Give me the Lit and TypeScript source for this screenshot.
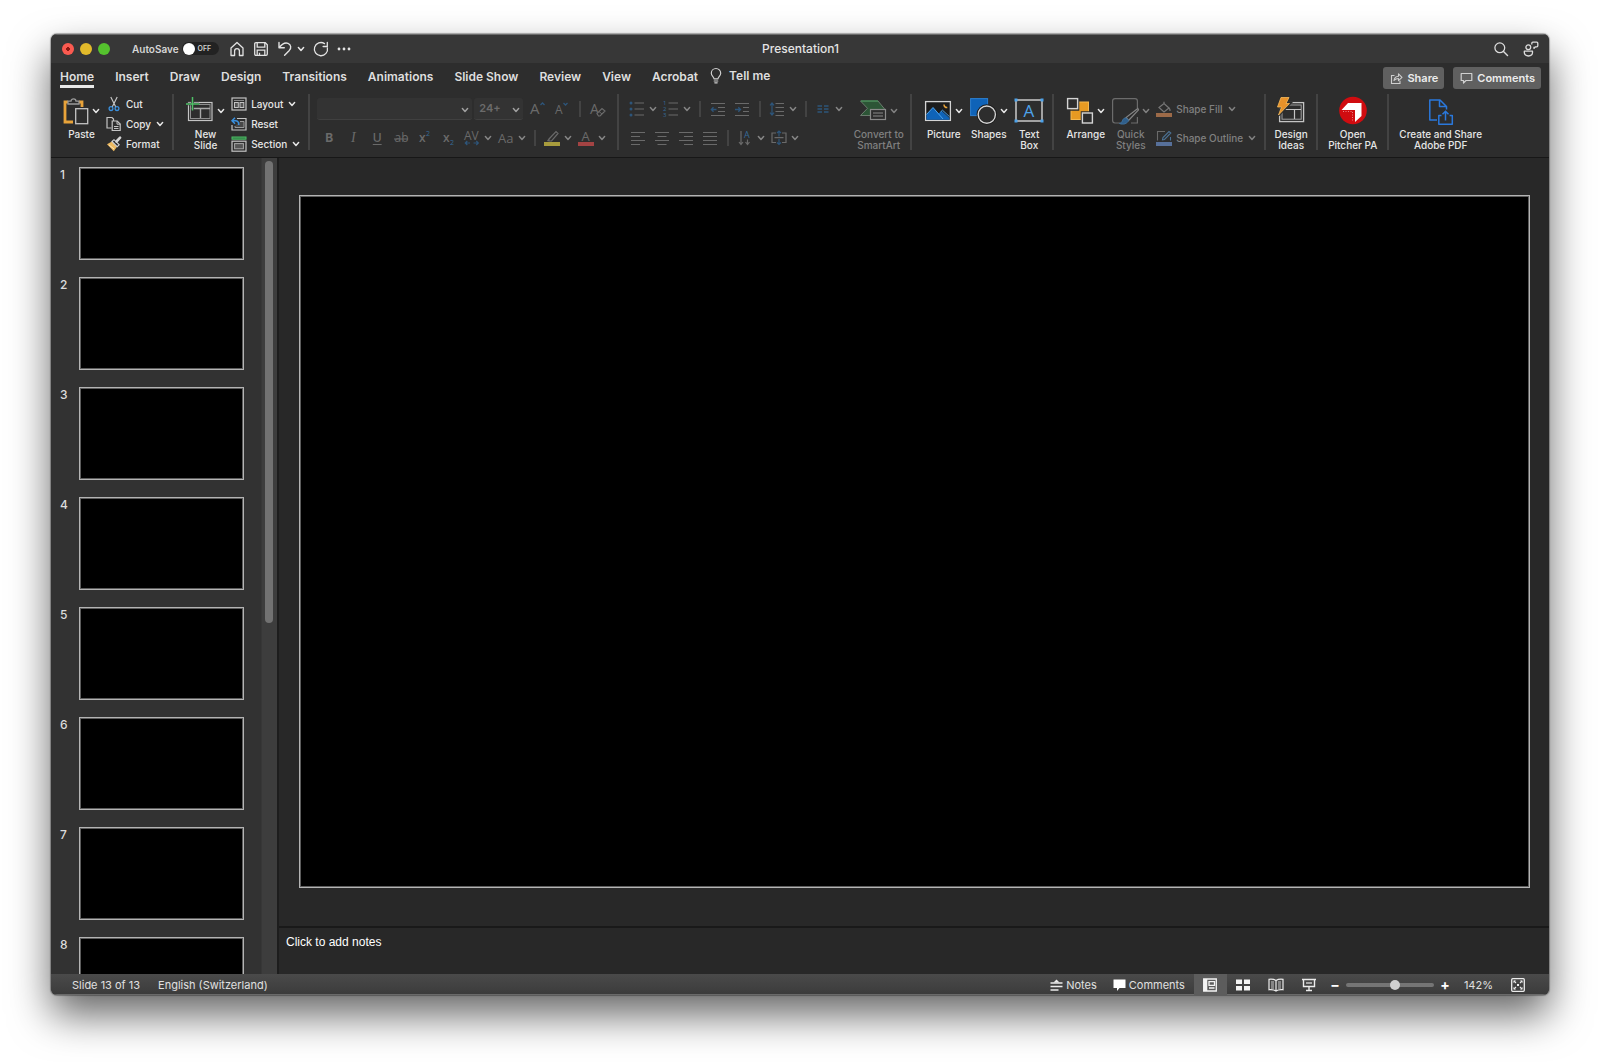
import { LitElement, html, svg, css, nothing, TemplateResult } from "lit";
import { customElement, state } from "lit/decorators.js";
import { classMap } from "lit/directives/class-map.js";

const ico = (w: number, h: number, body: unknown) => html`
  <svg class="ico" width=${w} height=${h} viewBox="0 0 ${w} ${h}" fill="none" aria-hidden="true">${body}</svg>`;

const chevron = html`<svg class="chev" width="8" height="8" viewBox="0 0 8 8" fill="none" aria-hidden="true">
  <path d="M1.4 2.6 4 5.4 6.6 2.6" stroke="currentColor" stroke-width="1.5" stroke-linecap="round" stroke-linejoin="round"/></svg>`;

const LIGHT = "#c4c4c4";
const DIM = "#6a6a6a";
const DIM_BLUE = "#2d557a";

const bars = (rows: [number, number][], step = 4, color = DIM) =>
  rows.map(([x1, x2], i) => svg`<path d="M${x1} ${1.5 + i * step}H${x2}" stroke=${color} stroke-width="1.2"/>`);

const icons = {
  home: ico(16, 16, svg`<path d="M2 7 8 1.5 14 7v7.5h-3.6V10a2.4 2.4 0 0 0-4.8 0v4.500H2z" stroke="#e2e2e2" stroke-width="1.3" stroke-linejoin="round"/>`),
  save: ico(16, 16, svg`<path d="M1.700 3q0-1.300 1.300-1.300h9.300l2 2v9.300q0 1.300-1.300 1.300H3q-1.300 0-1.300-1.300z" stroke="#e2e2e2" stroke-width="1.300"/><path d="M4.200 2v4.200h7.600V2M4.200 14V9.200h7.600V14M6.500 14v-2.300" stroke="#e2e2e2" stroke-width="1.300"/>`),
  undo: ico(16, 16, svg`<path d="M2 1.500v5.300h5.300M2.200 6.600C5 3 8 1.300 11 2.400c3.200 1.300 3.500 4.600 1.300 7L7.600 14.200" stroke="#e2e2e2" stroke-width="1.400" stroke-linecap="round" stroke-linejoin="round"/>`),
  redo: ico(16, 16, svg`<path d="M14.400 6.800A6.600 6.600 0 1 1 11.500 2.600" stroke="#e2e2e2" stroke-width="1.300" stroke-linecap="round"/><path d="M14.300 1.300v4.200h-4.200" stroke="#e2e2e2" stroke-width="1.300" stroke-linecap="round"/>`),
  dots: ico(14, 16, svg`<circle cx="2" cy="8" r="1.400" fill="#e2e2e2"/><circle cx="7" cy="8" r="1.400" fill="#e2e2e2"/><circle cx="12" cy="8" r="1.400" fill="#e2e2e2"/>`),
  search: ico(16, 16, svg`<circle cx="6.800" cy="6.800" r="4.900" stroke="#dcdcdc" stroke-width="1.300"/><path d="m10.500 10.500 4 4" stroke="#dcdcdc" stroke-width="1.500" stroke-linecap="round"/>`),
  person: ico(16, 16, svg`<circle cx="5.300" cy="6.300" r="2.400" stroke="#dcdcdc" stroke-width="1.300"/><path d="M1.300 10.200h8.200v1.400c0 2-1.800 3.400-4.100 3.400s-4.100-1.400-4.100-3.400z" stroke="#dcdcdc" stroke-width="1.300" stroke-linejoin="round"/><path d="M8.800 3.600V2.200q0-1 1-1h4q1 0 1 1v2.600q0 1-1 1h-1.300L11 7.400V5.800" stroke="#dcdcdc" stroke-width="1.300" stroke-linejoin="round"/>`),
  bulb: ico(12, 16, svg`<path d="M4 10.800c0-1.800-2.700-2.800-2.700-5.600a4.700 4.700 0 0 1 9.400 0c0 2.800-2.700 3.800-2.700 5.600zM4.200 13h3.600M4.800 14.800h2.400" stroke="#cfcfcf" stroke-width="1.200" stroke-linecap="round" stroke-linejoin="round"/>`),
  share: ico(13, 13, svg`<path d="M4.500 3.500h-3v8h8.500V8.800" stroke="#cfcfcf" stroke-width="1.100"/><path d="M4 8.500c.4-2.600 2-4 4.500-4.200V1.800L12 5.300 8.500 8.600V6.500C6.500 6.500 5.200 7.200 4 8.500z" stroke="#cfcfcf" stroke-width="1.100" stroke-linejoin="round"/>`),
  bubble: ico(13, 13, svg`<path d="M1.200 1.500h10.600v7H6L3.500 11V8.500H1.200z" stroke="#d0d0d0" stroke-width="1.200" stroke-linejoin="round"/>`),

  paste: ico(26, 28, svg`<path d="M5 5H2v20h8M16 5h3v5" stroke="#e8a33a" stroke-width="2.800"/><path d="M5 7V4.200h3c0-3.200 5-3.200 5 0h3V7z" stroke="#9a9a9a" stroke-width="1.300" fill="#2d2d2d"/><rect x="12.700" y="11.700" width="12" height="15" fill="#2d2d2d" stroke=${LIGHT} stroke-width="1.300"/>`),
  cut: ico(16, 16, svg`<path d="M4.800 1 9.800 11M11.200 1 6.200 11" stroke=${LIGHT} stroke-width="1.200"/><circle cx="5" cy="12.600" r="1.900" stroke="#3a8fdc" stroke-width="1.300"/><circle cx="11" cy="12.600" r="1.900" stroke="#3a8fdc" stroke-width="1.300"/>`),
  copy: ico(16, 16, svg`<path d="M5.500 12H1V1.500h5l1.500 1.500v2" stroke=${LIGHT} stroke-width="1.200"/><path d="M6.200 5h5l3 3v6.500h-8z" fill="#2d2d2d" stroke=${LIGHT} stroke-width="1.200"/><path d="M11 5v3.200h3.200M8 10.500h4.500M8 12.500h4.500" stroke=${LIGHT} stroke-width="1"/>`),
  format: ico(16, 16, svg`<path d="M1 8.200 6 5.500l5 5.200-3.200 4.500z" fill="#edb95f"/><path d="m3 9 5 4" stroke="#fbe7bf" stroke-width="1"/><path d="m6 5.500 2-1.800 5.200 5.100-2 1.900z" fill="#2d2d2d" stroke="#d5d5d5" stroke-width="1.100"/><path d="m10.500 5.500 3.600-3.800" stroke="#d5d5d5" stroke-width="2.600" stroke-linecap="round"/>`),
  newSlide: ico(28, 28, svg`<rect x="2.500" y="5.500" width="23.500" height="18" stroke=${LIGHT} stroke-width="1.200"/><rect x="4.500" y="7.500" width="19.500" height="14" stroke="#8d8d8d"/><path d="M5 11.500h19M14.500 11.500V21" stroke="#a8a8a8" stroke-width="1.400"/><path d="M6.500 1v12M0 7h13" stroke="#2d2d2d" stroke-width="2.500"/><path d="M6.500 0v13.500M0 7h13.500" stroke="#4fbf67" stroke-width="1.500"/>`),
  layout: ico(16, 14, svg`<rect x="1" y="1" width="14" height="12" stroke=${LIGHT} stroke-width="1.200"/><path d="M3 3.500h10" stroke="#8a8a8a"/><rect x="3.500" y="5.500" width="3.800" height="5" fill="#555" stroke=${LIGHT}/><rect x="9" y="5.500" width="3.800" height="5" fill="#555" stroke=${LIGHT}/>`),
  reset: ico(16, 14, svg`<path d="M6 1.500h9V13H1V8" stroke=${LIGHT} stroke-width="1.200"/><path d="M9 4.500h4v6H4V9" stroke="#9a9a9a" fill="#484848"/><path d="M4 .800 1 3.800l3 3M1.300 3.800h3c2.500 0 3.500 1.400 3.500 4.200" stroke="#3a8fdc" stroke-width="1.500"/>`),
  section: ico(16, 16, svg`<rect x="1" y="1" width="14" height="2.200" fill="#2f7a43" stroke="#4fbf67" stroke-width="1"/><rect x="1" y="5.200" width="14" height="10" stroke=${LIGHT} stroke-width="1.200"/><rect x="3.600" y="7.600" width="8.800" height="5.200" fill="#555" stroke="#a8a8a8"/>`),

  grow: ico(16, 16, svg`<text x="0" y="13" font-size="15" fill=${DIM}>A</text><path d="m10.500 4 2-2 2 2" stroke=${DIM_BLUE} stroke-width="1.300"/>`),
  shrink: ico(16, 16, svg`<text x="1" y="13" font-size="12" fill=${DIM}>A</text><path d="m9.500 2 2 2 2-2" stroke=${DIM_BLUE} stroke-width="1.300"/>`),
  clear: ico(16, 16, svg`<text x="0" y="12.500" font-size="14" fill=${DIM}>A</text><path d="m7 12.500 5-5 3 2.500-5 5H8.500z" fill="#2d2d2d" stroke=${DIM} stroke-width="1.200"/><path d="m9 10.500 3 2.500" stroke=${DIM}/>`),
  strike: ico(16, 16, svg`<text x="1.500" y="12" font-size="12" fill=${DIM}>ab</text><path d="M1 9h14" stroke=${DIM} stroke-width="1.200"/>`),
  sup: ico(16, 16, svg`<text x="2" y="12" font-size="12" font-weight="600" fill=${DIM}>x</text><text x="9" y="6" font-size="7" fill="#356a98">2</text>`),
  sub: ico(16, 16, svg`<text x="2" y="12" font-size="12" font-weight="600" fill=${DIM}>x</text><text x="9" y="15" font-size="7" fill="#356a98">2</text>`),
  spacing: ico(16, 16, svg`<text x="0" y="9.500" font-size="12" fill=${DIM}>AV</text><path d="M6 13H1.500M3.300 11l-2 2 2 2M9.500 13H14M12.300 11l2 2-2 2" stroke=${DIM_BLUE} stroke-width="1.200"/>`),
  textCase: ico(16, 16, svg`<text x="0" y="12.500" font-size="13" fill=${DIM}>Aa</text>`),
  highlight: ico(16, 16, svg`<path d="m5 9 7-7.500 2 2L7.500 11H5zM3.500 11.200 5 9" stroke=${DIM} stroke-width="1.200"/><rect x="0" y="12" width="16" height="4" fill="#a89c3d"/>`),
  fontColor: ico(16, 16, svg`<text x="3.500" y="10.500" font-size="13" fill=${DIM}>A</text><rect x="0" y="12" width="16" height="4" fill="#a34343"/>`),

  bullets: ico(16, 16, svg`${[2, 8, 14].map((y) => svg`<circle cx="2" cy=${y} r="1.500" fill=${DIM_BLUE}/><path d="M5.500 ${y}H15" stroke=${DIM} stroke-width="1.200"/>`)}`),
  numbers: ico(16, 16, svg`${[2, 8, 14].map((y, i) => svg`<text x="0" y=${y + 2} font-size="6" fill="#356a98">${i + 1}</text><path d="M5.500 ${y}H15" stroke=${DIM} stroke-width="1.200"/>`)}`),
  outdent: ico(16, 14, svg`${bars([[1, 15], [8, 15], [8, 15], [1, 15]])}<path d="M6.500 7.500h-5M3.500 5.200 1.300 7.500l2.200 2.300" stroke=${DIM_BLUE} stroke-width="1.300"/>`),
  indent: ico(16, 14, svg`${bars([[1, 15], [9, 15], [9, 15], [1, 15]])}<path d="M1 7.500h5.500M4.300 5.200l2.200 2.300-2.200 2.300" stroke=${DIM_BLUE} stroke-width="1.300"/>`),
  lines: ico(16, 14, svg`${bars([[6.5, 15], [6.5, 15], [6.5, 15], [6.5, 15]])}<path d="M3 1v12M1 3.300 3 1l2 2.300M1 10.700 3 13l2-2.300" stroke=${DIM_BLUE} stroke-width="1.200"/>`),
  columns: ico(16, 14, svg`${[4, 7, 10].map((y) => svg`<path d="M2.500 ${y}H7M9 ${y}h4.500" stroke=${DIM_BLUE} stroke-width="1.300"/>`)}`),
  left: ico(16, 14, svg`${bars([[1, 15], [1, 10], [1, 15], [1, 10]])}`),
  center: ico(16, 14, svg`${bars([[1, 15], [3.5, 12.5], [1, 15], [3.5, 12.5]])}`),
  right: ico(16, 14, svg`${bars([[1, 15], [6, 15], [1, 15], [6, 15]])}`),
  justify: ico(16, 14, svg`${bars([[1, 15], [1, 15], [1, 15], [1, 15]])}`),
  direction: ico(16, 16, svg`<path d="M4 1v13M2 12l2 2.500L6 12M10.500 9.500V14M8.500 12l2 2.500 2-2.500" stroke=${DIM} stroke-width="1.200"/><text x="7" y="8" font-size="9" fill="#356a98">A</text>`),
  alignText: ico(16, 16, svg`<path d="M5 3H1v9.500h4M11 3h4v9.500h-4M3.500 7.700h9" stroke=${DIM} stroke-width="1.200"/><path d="M8 1v5.500M6 3l2-2 2 2M8 9v5.500M6 12.500l2 2 2-2" stroke=${DIM_BLUE} stroke-width="1.200"/>`),
  smartArt: ico(28, 28, svg`<path d="M1.500 4H19l7 8.500v6H1.500l7-7.200z" fill="#2c5536" stroke="#6a7a6d" stroke-width="1"/><path d="M2 4h17" stroke="#3f9a55"/><rect x="11.500" y="12.500" width="15" height="10" fill="#2d2d2d" stroke="#8a8a8a" stroke-width="1.200"/><path d="M14 16h10M14 19h10" stroke="#8a8a8a"/>`),

  picture: ico(28, 28, svg`<rect x="1.600" y="4.600" width="24.800" height="18.800" fill="#1c1c1c" stroke="#d4d4d4" stroke-width="1.300"/><path d="M2.500 17.500 9 10.500l5.500 6 3-2.800 8 7.300v1.700h-23z" fill="#0f63b8"/><path d="M2.500 17.500 9 10.500l10 11.500M16.500 15l2-1.800 7 6.500" stroke="#4ea3ea" stroke-width="1"/><path d="M20 7.500c0 2 1.500 3.300 3.300 3" stroke="#e8a33a" stroke-width="1.500"/>`),
  shapes: ico(28, 28, svg`<rect x="1.600" y="1.600" width="17" height="17" fill="#0f63b8" stroke="#2c7fd0"/><circle cx="17.800" cy="17.600" r="9" fill="#2d2d2d" stroke="#1c1c1c" stroke-width="2.500"/><circle cx="17.800" cy="17.600" r="8.600" stroke="#d4d4d4" stroke-width="1.400"/>`),
  textBox: ico(30, 28, svg`<rect x="2" y="3" width="26" height="21" stroke="#d4d4d4" stroke-width="1.400"/><text x="9.500" y="19.500" font-size="17" fill="#4ea3ea">A</text><path d="M.500 1.500h3v3h-3zM26.500 1.500h3v3h-3zM.500 22.500h3v3h-3zM26.500 22.500h3v3h-3z" fill="#4ea3ea"/>`),
  arrange: ico(28, 28, svg`<rect x="5" y="5" width="17.500" height="17.500" fill="#e79a22" stroke="#f4b850"/><path d="M12.500 4v9H4M15.500 24v-9H24" stroke="#2d2d2d" stroke-width="1.500"/><rect x="1.600" y="1.600" width="10" height="10" fill="#2d2d2d" stroke="#d4d4d4" stroke-width="1.400"/><rect x="16.400" y="16" width="10" height="10" fill="#2d2d2d" stroke="#d4d4d4" stroke-width="1.400"/>`),
  quick: ico(28, 28, svg`<path d="M9 26H4q-2.400 0-2.400-2.400V4Q1.600 1.600 4 1.600h20Q26.400 1.600 26.400 4v7M26.400 20v6H20" stroke="#6c6c6c" stroke-width="1.200"/><path d="M26.800 11.500 15 20.500l2.500 3 10-10.500z" stroke="#858585" stroke-width="1.200" fill="#2d2d2d"/><path d="M17.500 23.500c-1 3-5 4.500-9 3 2.500-.8 2.500-2 3.500-4 1.400-2.300 4.500-1.800 5.500 1z" fill="#2f5f8c" stroke="#3f729e"/>`),
  fill: ico(16, 16, svg`<path d="m3 6.500 5-4 5 4.500-5 4zM8 2.500V.800M13 7c1 1 1.200 2 1 3" stroke="#777" stroke-width="1.200"/><rect x="0" y="12" width="16" height="4" fill="#9c6a48"/>`),
  outline: ico(16, 16, svg`<path d="M9 1.500H1.500v9" stroke="#6a6a6a" stroke-width="1.100"/><path d="M6.500 9.800 7 7.500l6-6 1.800 1.500L8.500 9.500zM14.500 7v3.500" stroke="#4c7396" stroke-width="1.100"/><rect x="0" y="12" width="16" height="4" fill="#57709a"/>`),
  ideas: ico(30, 28, svg`<rect x="3.600" y="5.600" width="24" height="19" fill="#2d2d2d" stroke=${LIGHT} stroke-width="1.300"/><rect x="6" y="8" width="19.200" height="14.200" stroke="#a0a0a0"/><path d="M6 12.500h19M18.500 12.500V22" stroke=${LIGHT} stroke-width="1.200"/><path d="M5 .500h8L10 6.500h3.500L2.500 18 5.500 10H1.500z" stroke="#2d2d2d" stroke-width="3"/><path d="M5 .500h8L10 6.500h3.500L2.500 18 5.500 10H1.500z" fill="#e8922a" stroke="#f6bb5c" stroke-width=".8"/>`),
  pitcher: ico(28, 28, svg`<circle cx="14" cy="13.500" r="13.800" fill="#d00c10"/><path d="M9 6h13.500v13L16 25V13H2.500z" fill="#fff"/><path d="M4 14.500h9.500V25" stroke="#f2a0a0" stroke-width=".8" stroke-dasharray="1 1.500"/>`),
  pdf: ico(26, 28, svg`<path d="M9 23H1.800V3H12l6.500 6.500v3M11.500 3v6.500h6.500" stroke="#2a78dc" stroke-width="1.500" stroke-linejoin="round"/><path d="M13.500 18.500h-2.700v8.700h13.500v-8.700h-2.700" stroke="#2a78dc" stroke-width="1.500" stroke-linejoin="round"/><path d="M17.500 23.500v-9M14.500 17.300l3-3 3 3" stroke="#2a78dc" stroke-width="1.500"/>`),

  notes: ico(13, 14, svg`<path d="M3.500 4.500 6.500 1.500l3 3z" fill="#ececec"/><path d="M.500 5h12M.500 8.500h12M.500 12h8" stroke="#ececec" stroke-width="1.300"/>`),
  commentFill: ico(13, 14, svg`<path d="M.500 1.500h12v8.500H6.500L4 13V10H.500z" fill="#fff"/>`),
  normal: ico(14, 14, svg`<path d="M.700 1h12.600v12H.700z" stroke="#f4f4f4" stroke-width="1.300"/><path d="M.700 1h3.600v12H.700z" fill="#f4f4f4"/><path d="M6 3.700h5.500v3.600H6zM6 10h5.500" stroke="#f4f4f4" stroke-width="1.300"/>`),
  sorter: ico(14, 14, svg`<path d="M0 1.500h6v4.500H0zM8 1.500h6v4.500H8zM0 8h6v4.500H0zM8 8h6v4.500H8z" fill="#f4f4f4"/>`),
  reading: ico(16, 14, svg`<path d="M8 2.500C6 1.200 3.500 1 1 1.300v10.400c2.500-.3 5-.1 7 1.300 2-1.400 4.500-1.600 7-1.300V1.300C12.500 1 10 1.200 8 2.500zM8 2.500V13" stroke="#ececec" stroke-width="1.200"/><path d="M3 4h3M3 6h3M3 8h3M3 10h3M10 4h3M10 6h3M10 8h3M10 10h3" stroke="#c9c9c9"/>`),
  show: ico(14, 14, svg`<path d="M0 1.500h14M1.500 2v6.500h11V2M7 8.500V12M4 12.500h6" stroke="#ececec" stroke-width="1.400"/><path d="M4 5h6" stroke="#ececec" stroke-width="1.200"/>`),
  fit: ico(14, 14, svg`<rect x=".7" y=".7" width="12.600" height="12.600" rx="1" stroke="#ececec" stroke-width="1.300"/><path d="M3 3l2 2M11 3 9 5M3 11l2-2M11 11 9 9" stroke="#ececec" stroke-width="1.100"/><path d="M2.500 2.500H5L2.500 5zM11.500 2.500H9L11.500 5zM2.500 11.500H5L2.500 9zM11.500 11.500H9L11.500 9zM6 6h2v2H6z" fill="#ececec"/>`),
};

const TABS = ["Home", "Insert", "Draw", "Design", "Transitions", "Animations", "Slide Show", "Review", "View", "Acrobat"];
const SLIDES = [1, 2, 3, 4, 5, 6, 7, 8];

const VIEWS: [string, TemplateResult][] = [
  ["Normal", icons.normal],
  ["Slide Sorter", icons.sorter],
  ["Reading View", icons.reading],
  ["Slide Show", icons.show],
];

@customElement("app-root")
export class AppRoot extends LitElement {
  @state() private tab = "Home";
  @state() private view = "Normal";
  @state() private zoom = 142;

  static styles = css`
    :host {
      display: block;
      box-sizing: border-box;
      height: 100vh;
      min-height: 400px;
      padding: 34px 51px 67px 51px;
      overflow: hidden;
      background: #fff;
      color: #e6e6e6;
      font: 500 11px/12px Inter, "Liberation Sans", sans-serif;
    }
    * { box-sizing: border-box; }
    button, select, input { font: inherit; color: inherit; margin: 0; }
    button { background: none; border: 0; padding: 0; white-space: nowrap; }
    svg { display: block; flex: none; overflow: visible; }
    svg text { font-family: "Open Sans", "Liberation Sans", sans-serif; }

    .window {
      display: flex;
      flex-direction: column;
      height: 100%;
      border-radius: 6px;
      overflow: hidden;
      background: #2d2d2d;
    }
    .frame {
      height: 100%;
      border-radius: 6px;
      box-shadow: 0 0 1px 1px rgba(0, 0, 0, 0.3), 0 20px 40px rgba(0, 0, 0, 0.6);
    }

    .titlebar {
      display: grid;
      grid-template-columns: 1fr auto 1fr;
      align-items: center;
      height: 29px;
      flex: none;
      padding: 0 10px 0 11px;
      background: #373737;
      box-shadow: inset 0 1px #6a6a6a;
    }
    .titlebar h1 { margin: 0; font: 500 12px/16px Inter, sans-serif; color: #e4e4e4; }
    .row { display: flex; align-items: center; }
    .lights { gap: 6px; margin-right: 22px; }
    .light { width: 12px; height: 12px; border-radius: 50%; }
    .close { background: radial-gradient(circle, #8c1710 0 2px, #fb5a50 2px); }
    .minimise { background: #e2ba2b; }
    .maximise { background: #55c22e; }
    .autosave { gap: 3px; color: #d6d6d6; margin-right: 10px; font-size: 10px; font-weight: 600; }
    .switch {
      appearance: none;
      width: 12px;
      height: 12px;
      border-radius: 50%;
      background: #fff;
    }
    .track {
      gap: 3px;
      width: 37px;
      height: 13px;
      padding: 0 1px;
      border-radius: 7px;
      background: #222;
      font-size: 7px;
      color: #cfcfcf;
    }
    .quick { gap: 8px; }
    .undo { gap: 4px; }
    .end { justify-content: flex-end; gap: 14px; }

    .tabs { height: 29px; flex: none; padding: 0 8px 0 9px; align-items: flex-start; }
    .tablist { gap: 21px; align-items: flex-start; }
    .tab {
      font: 600 12px/16px Inter, sans-serif;
      height: 25px;
      padding-top: 5px;
      border-bottom: 3px solid transparent;
      color: #dedede;
    }
    .tab.active { border-image: linear-gradient(#e8e8e8, #e8e8e8) 1; }
    .tell { display: flex; gap: 7px; font: 600 12px/16px Inter, sans-serif; padding-top: 5px; margin-left: 12px; color: #dedede; }
    .actions { margin-left: auto; gap: 9px; padding-top: 4px; }
    .pill {
      display: flex;
      align-items: center;
      gap: 4px;
      height: 22px;
      padding: 0 6px 0 7px;
      border-radius: 3px;
      background: #606060;
      color: #ececec;
      font-weight: 600;
    }

    .ribbon {
      display: flex;
      flex: none;
      height: 66px;
      padding: 2px 0 7px;
      border-bottom: 1px solid #171717;
    }
    .group { display: flex; gap: 6px; padding: 0 8px 0 12px; border-right: 2px solid #434343; flex: none; }
    .group:last-child { border-right: 0; }
    .group.tight { padding: 0 7px; }
    .group.text { padding: 0 12px 0 7px; }
    .group.solo { padding: 0 10px; }
    .big {
      display: flex;
      flex-direction: column;
      align-items: center;
      gap: 4px;
      padding-top: 3px;
      font-size: 10px;
      line-height: 11px;
    }
    .big .label { width: 0; display: flex; justify-content: center; }
    .big .label span { flex: none; text-align: center; white-space: pre; }
    .big .top { display: flex; align-items: center; gap: 3px; height: 28px; }
    .big.wide .label { width: auto; }
    .off { color: #808080; }
    .stack { display: grid; grid-auto-rows: 20px; align-items: center; align-content: start; }
    .stack.pair { grid-auto-rows: 29px; }
    .small { display: flex; align-items: center; gap: 4px; font-size: 10px; }
    .small .chev { margin-left: 1px; }
    .grid { display: flex; flex-direction: column; }
    .tools { display: flex; align-items: center; height: 29px; flex: none; }
    .tool { width: 24px; height: 24px; display: grid; place-items: center; font-size: 12px; color: #6a6a6a; }
    .tool.split { width: 34px; display: flex; align-items: center; justify-content: center; gap: 4px; }
    .split .chev { color: #858585; }
    .bold { font-weight: 700; }
    .italic { font-family: "Liberation Serif", serif; font-style: italic; font-size: 14px; }
    .underline { text-decoration: underline; text-underline-offset: 2px; }
    .rule { width: 2px; height: 16px; background: #434343; margin: 0 5px; }
    .field { position: relative; height: 22px; }
    .field select {
      appearance: none;
      width: 100%;
      height: 100%;
      padding: 0 5px;
      border: 0;
      border-bottom: 1px solid #404040;
      border-radius: 3px;
      background: #333;
      color: #6b6b6b;
      font-size: 11px;
      font-weight: 600;
      opacity: 1;
    }
    .field .chev { position: absolute; right: 3px; top: 8px; color: #a0a0a0; }
    .family { width: 155px; margin-right: 2px; }
    .size { width: 49px; margin-right: 3px; }
    .paragraph { margin-right: 7px; }

    .body { display: flex; flex: 1; min-height: 0; }
    .panel { display: flex; width: 228px; flex: none; background: #323232; border-right: 2px solid #1d1d1d; }
    .thumbs {
      flex: 1;
      margin: 0;
      padding: 9px 17px 0 9px;
      display: flex;
      flex-direction: column;
      gap: 17px;
      list-style: none;
      overflow: hidden;
    }
    .thumb { display: grid; grid-template-columns: 19px 1fr; flex: none; }
    .thumb span { font-size: 12px; line-height: 16px; color: #dcdcdc; }
    .thumb button, .slide { background: #000; border: 1px solid #b4b4b4; box-shadow: inset 0 0 0 1px #5c5c5c; }
    .thumb button { height: 93px; }
    .scroll { width: 16px; padding: 3px; background: #3d3d3d; border-left: 1px solid #373737; flex: none; }
    .bar { width: 8px; height: 57%; border-radius: 4px; background: #727272; }

    .main { display: flex; flex-direction: column; flex: 1; min-width: 0; background: #282828; }
    .stage { flex: 1; min-height: 0; padding: 37px 19px 38px 20px; }
    .slide { height: 100%; }
    .notes {
      height: 48px;
      flex: none;
      padding: 6px 7px;
      border: 0;
      border-top: 2px solid #191919;
      background: #282828;
      resize: none;
      outline: 0;
      font: 12px/16px "Liberation Sans", Arial, sans-serif;
      color: #fff;
    }
    .notes::placeholder { color: #fff; opacity: 1; }

    .status {
      height: 21px;
      flex: none;
      padding: 0 24px 0 21px;
      background: linear-gradient(#4a4a4a, #3b3b3b);
      box-shadow: inset 0 -1px #6a6a6a;
      color: #e0e0e0;
      font-weight: 400;
    }
    .status .lang { margin-left: 18px; }
    .status .right { margin-left: auto; height: 100%; }
    .status .toggle { display: flex; align-items: center; gap: 3px; margin-right: 16px; }
    .status .toggle.last { margin-right: 9px; }
    .view { width: 33px; height: 100%; display: grid; place-items: center; }
    .view.active { background: #5c5c5c; }
    .step { font: 700 14px/16px Inter, sans-serif; width: 10px; color: #fff; }
    .zoom { gap: 6px; margin-left: 4px; }
    .slider { appearance: none; width: 88px; height: 10px; background: none; }
    .slider::-webkit-slider-runnable-track { height: 4px; border-radius: 2px; background: #757575; }
    .slider::-webkit-slider-thumb {
      appearance: none;
      width: 10px;
      height: 10px;
      margin-top: -3px;
      border-radius: 50%;
      background: #cfcfcf;
    }
    .percent { margin: 0 18px 0 14px; }
  `;

  private big(label: string, icon: TemplateResult, opts: { menu?: boolean; off?: boolean; wide?: boolean } = {}) {
    return html`<button class=${classMap({ big: true, off: !!opts.off, wide: !!opts.wide })} ?disabled=${opts.off}>
      <span class="top">${icon}${opts.menu ? chevron : nothing}</span>
      <span class="label"><span>${label}</span></span>
    </button>`;
  }

  private small(label: string, icon: TemplateResult, menu = false, off = false) {
    return html`<button class=${classMap({ small: true, off })} ?disabled=${off}>
      ${icon}<span>${label}</span>${menu ? chevron : nothing}
    </button>`;
  }

  private tool(name: string, content: unknown, extra = "") {
    return html`<button class="tool ${extra}" disabled aria-label=${name}>${content}</button>`;
  }

  private split(name: string, icon: TemplateResult) {
    return html`<button class="tool split" disabled aria-label=${name}>${icon}${chevron}</button>`;
  }

  private renderTitle() {
    return html`<header class="titlebar">
      <div class="row">
        <div class="row lights">
          <button class="light close" aria-label="Close"></button>
          <button class="light minimise" aria-label="Minimise"></button>
          <button class="light maximise" aria-label="Full screen"></button>
        </div>
        <label class="row autosave">AutoSave
          <span class="row track"><input class="switch" type="checkbox" role="switch" />OFF</span>
        </label>
        <div class="row quick">
          <button aria-label="Home">${icons.home}</button>
          <button aria-label="Save">${icons.save}</button>
          <button class="row undo" aria-label="Undo">${icons.undo}${chevron}</button>
          <button aria-label="Redo">${icons.redo}</button>
          <button aria-label="More">${icons.dots}</button>
        </div>
      </div>
      <h1>Presentation1</h1>
      <div class="row end">
        <button aria-label="Search">${icons.search}</button>
        <button aria-label="Collaborate">${icons.person}</button>
      </div>
    </header>`;
  }

  private renderTabs() {
    return html`<nav class="row tabs">
      <div class="row tablist" role="tablist">
        ${TABS.map((t) => html`<button
          role="tab"
          aria-selected=${t === this.tab}
          class=${classMap({ tab: true, active: t === this.tab })}
          @click=${() => (this.tab = t)}
        >${t}</button>`)}
      </div>
      <button class="tell">${icons.bulb}Tell me</button>
      <div class="row actions">
        <button class="pill">${icons.share}Share</button>
        <button class="pill">${icons.bubble}Comments</button>
      </div>
    </nav>`;
  }

  private renderRibbon() {
    const rule = html`<span class="rule"></span>`;
    return html`<section class="ribbon" aria-label="Ribbon">
      <div class="group">
        ${this.big("Paste", icons.paste, { menu: true })}
        <div class="stack">
          ${this.small("Cut", icons.cut)} ${this.small("Copy", icons.copy, true)} ${this.small("Format", icons.format)}
        </div>
      </div>
      <div class="group">
        ${this.big("New\nSlide", icons.newSlide, { menu: true })}
        <div class="stack">
          ${this.small("Layout", icons.layout, true)} ${this.small("Reset", icons.reset)}
          ${this.small("Section", icons.section, true)}
        </div>
      </div>
      <div class="group tight">
        <div class="grid">
          <div class="tools">
            <div class="field family"><select disabled aria-label="Font"><option></option></select>${chevron}</div>
            <div class="field size"><select disabled aria-label="Font size"><option>24+</option></select>${chevron}</div>
            ${this.tool("Increase font size", icons.grow)} ${this.tool("Decrease font size", icons.shrink)} ${rule}
            ${this.tool("Clear formatting", icons.clear)}
          </div>
          <div class="tools">
            ${this.tool("Bold", "B", "bold")} ${this.tool("Italic", "I", "italic")}
            ${this.tool("Underline", "U", "underline")} ${this.tool("Strikethrough", icons.strike)}
            ${this.tool("Superscript", icons.sup)} ${this.tool("Subscript", icons.sub)}
            ${this.split("Character spacing", icons.spacing)} ${this.split("Change case", icons.textCase)} ${rule}
            ${this.split("Highlight", icons.highlight)} ${this.split("Font colour", icons.fontColor)}
          </div>
        </div>
      </div>
      <div class="group text">
        <div class="grid paragraph">
          <div class="tools">
            ${this.split("Bullets", icons.bullets)} ${this.split("Numbering", icons.numbers)} ${rule}
            ${this.tool("Decrease indent", icons.outdent)} ${this.tool("Increase indent", icons.indent)} ${rule}
            ${this.split("Line spacing", icons.lines)} ${rule} ${this.split("Columns", icons.columns)}
          </div>
          <div class="tools">
            ${this.tool("Align left", icons.left)} ${this.tool("Centre", icons.center)}
            ${this.tool("Align right", icons.right)} ${this.tool("Justify", icons.justify)} ${rule}
            ${this.split("Text direction", icons.direction)} ${this.split("Align text", icons.alignText)}
          </div>
        </div>
        ${this.big("Convert to\nSmartArt", icons.smartArt, { menu: true, off: true })}
      </div>
      <div class="group">
        ${this.big("Picture", icons.picture, { menu: true })} ${this.big("Shapes", icons.shapes, { menu: true })}
        ${this.big("Text\nBox", icons.textBox)}
      </div>
      <div class="group">
        ${this.big("Arrange", icons.arrange, { menu: true })}
        ${this.big("Quick\nStyles", icons.quick, { menu: true, off: true })}
        <div class="stack pair">
          ${this.small("Shape Fill", icons.fill, true, true)} ${this.small("Shape Outline", icons.outline, true, true)}
        </div>
      </div>
      <div class="group solo">${this.big("Design\nIdeas", icons.ideas)}</div>
      <div class="group solo">${this.big("Open\nPitcher PA", icons.pitcher, { wide: true })}</div>
      <div class="group solo">${this.big("Create and Share\nAdobe PDF", icons.pdf, { wide: true })}</div>
    </section>`;
  }

  private renderStatus() {
    return html`<footer class="row status">
      <span>Slide 13 of 13</span>
      <span class="lang">English (Switzerland)</span>
      <div class="row right">
        <button class="toggle">${icons.notes}Notes</button>
        <button class="toggle last">${icons.commentFill}Comments</button>
        ${VIEWS.map(([name, icon]) => html`<button
          aria-label=${name}
          class=${classMap({ view: true, active: name === this.view })}
          @click=${() => (this.view = name)}
        >${icon}</button>`)}
        <div class="row zoom">
          <button class="step" aria-label="Zoom out" @click=${() => (this.zoom -= 10)}>−</button>
          <input
            class="slider"
            type="range"
            aria-label="Zoom"
            min="10"
            max="246"
            .value=${String(this.zoom)}
            @input=${(e: Event) => (this.zoom = Number((e.target as HTMLInputElement).value))}
          />
          <button class="step" aria-label="Zoom in" @click=${() => (this.zoom += 10)}>+</button>
        </div>
        <span class="percent">${this.zoom}%</span>
        <button aria-label="Fit slide to window">${icons.fit}</button>
      </div>
    </footer>`;
  }

  render() {
    return html`<div class="frame"><div class="window">
      ${this.renderTitle()} ${this.renderTabs()} ${this.renderRibbon()}
      <div class="body">
        <aside class="panel">
          <ol class="thumbs">
            ${SLIDES.map((n) => html`<li class="thumb"><span>${n}</span><button aria-label="Slide ${n}"></button></li>`)}
          </ol>
          <div class="scroll"><div class="bar"></div></div>
        </aside>
        <main class="main">
          <div class="stage"><div class="slide"></div></div>
          <textarea class="notes" aria-label="Notes" placeholder="Click to add notes"></textarea>
        </main>
      </div>
      ${this.renderStatus()}
    </div></div>`;
  }
}
